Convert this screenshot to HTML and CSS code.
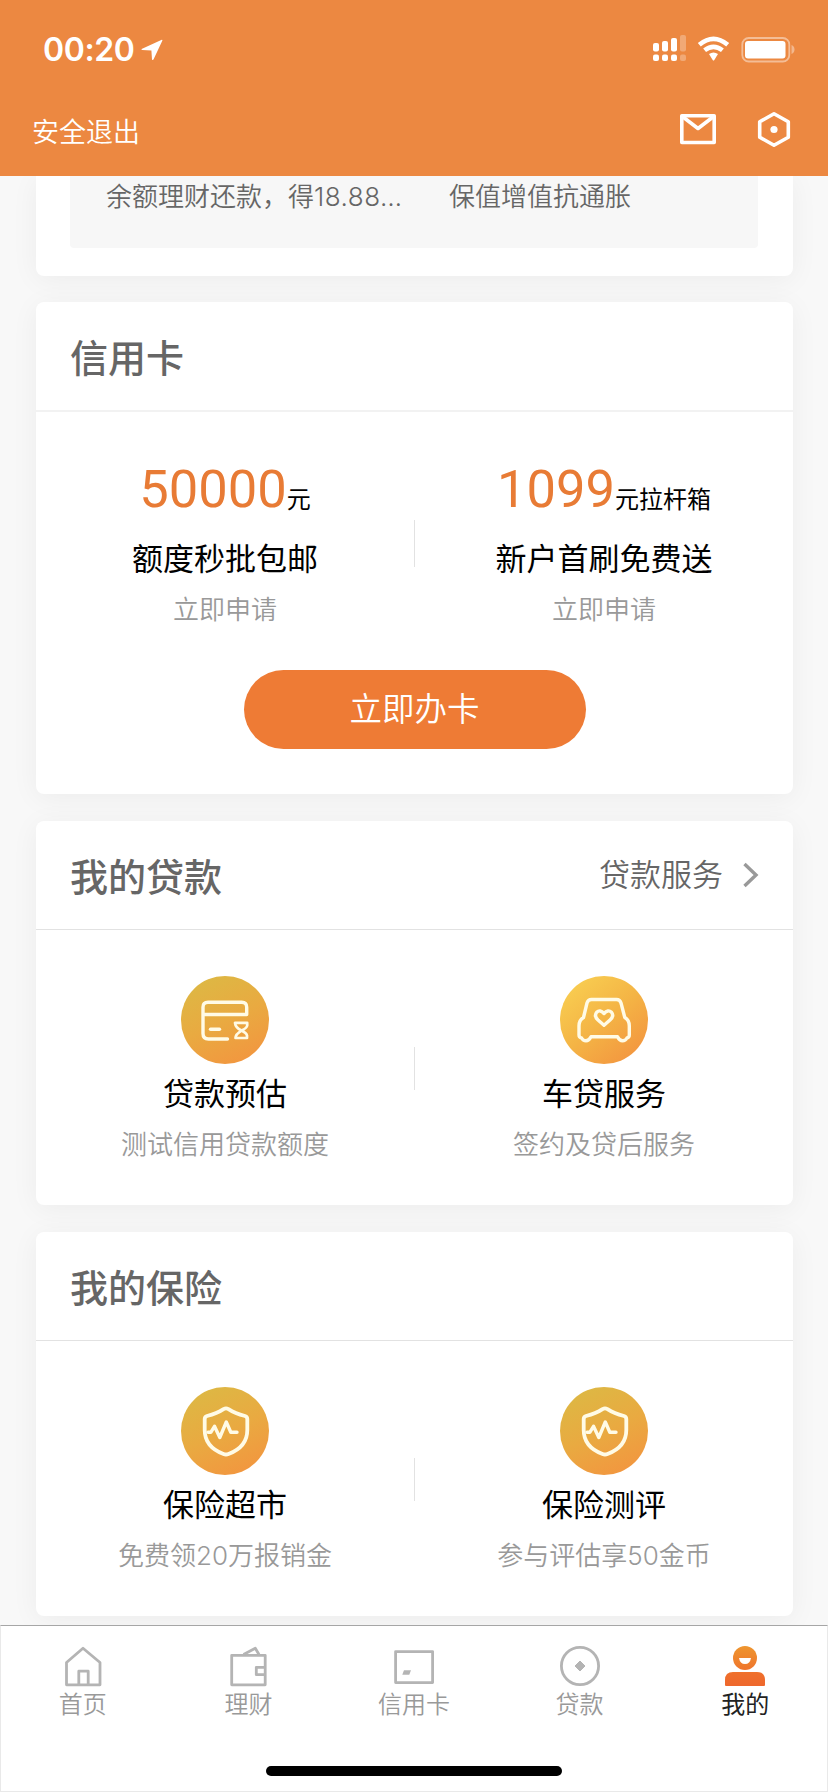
FILE: index.html
```html
<!DOCTYPE html>
<html lang="zh-CN">
<head>
<meta charset="utf-8">
<title>我的</title>
<link rel="stylesheet" href="styles.css">
</head>
<body>
<div class="screen">
  <header class="header">
    <div class="status">
      <div class="status-left">
        <span class="time">00:20</span>
        <svg class="locate" width="22" height="22" viewBox="0 0 22 22"><path d="M20.800 0.800 L0.600 10 Q0.200 10.900 1.200 11.100 L10.400 11.500 L11 20.400 Q11.700 21.400 12.500 20.500 L21.400 1.400 Q21.500 0.600 20.800 0.800Z" fill="#fff"/></svg>
      </div>
      <svg class="status-icons" width="144" height="30" viewBox="0 0 144 30">
        <g fill="#fff">
          <rect x="2" y="8" width="6" height="8.500" rx="2"/><rect x="11" y="6" width="6" height="10.500" rx="2"/><rect x="20" y="3" width="6" height="13.500" rx="2"/>
          <rect x="2" y="19.500" width="6" height="6.500" rx="2"/><rect x="11" y="19.500" width="6" height="6.500" rx="2"/><rect x="20" y="19.500" width="6" height="6.500" rx="2"/>
          <g opacity=".28"><rect x="29" y="0" width="6" height="16.500" rx="2"/><rect x="29" y="19.500" width="6" height="6.500" rx="2"/></g>
          <path d="M58 19 Q62.500 16 67 19 L63.300 25 Q62.500 26.200 61.700 25Z"/>
          <rect x="94" y="6" width="40.500" height="17.500" rx="3"/>
          <path d="M140.500 10 Q143.500 11.300 143.500 14.500 Q143.500 17.700 140.500 19Z" opacity=".4"/>
        </g>
        <g fill="none" stroke="#fff" stroke-width="4.600">
          <path d="M48.300 9.700 Q62.500 -2.100 76.700 9.700"/>
          <path d="M53.600 15.300 Q62.500 8.300 71.400 15.300"/>
        </g>
        <rect x="91.300" y="3" width="47" height="23.500" rx="6.500" fill="none" stroke="#fff" stroke-width="1.800" opacity=".45"/>
      </svg>
    </div>
    <div class="navbar">
      <span class="logout">安全退出</span>
      <div class="nav-icons">
        <svg width="38" height="38" viewBox="0 0 38 38" fill="none" stroke="#fff" stroke-width="3.600" stroke-linejoin="round"><rect x="2.800" y="5.800" width="32.400" height="26.700"/><path d="M4 7 L19 18.500 L34 7"/></svg>
        <svg width="38" height="38" viewBox="0 0 38 38"><path d="M19 3.800 L33.300 11.800 V27.200 L19 35.200 L4.700 27.200 V11.800Z" fill="none" stroke="#fff" stroke-width="3.600" stroke-linejoin="round"/><circle cx="19" cy="19.500" r="3.600" fill="#fff"/></svg>
      </div>
    </div>
  </header>

  <main class="content">
    <section class="card promo">
      <div class="promo-box">
        <span class="promo-text">余额理财还款，得<span class="figure">18.88…</span></span>
        <span class="promo-text">保值增值抗通胀</span>
      </div>
    </section>

    <section class="card credit">
      <div class="card-head"><h2>信用卡</h2></div>
      <div class="pair offers">
        <div class="item">
          <div class="amount"><b>50000</b><span>元</span></div>
          <div class="item-title">额度秒批包邮</div>
          <div class="item-sub">立即申请</div>
        </div>
        <div class="item">
          <div class="amount"><b>1099</b><span>元拉杆箱</span></div>
          <div class="item-title">新户首刷免费送</div>
          <div class="item-sub">立即申请</div>
        </div>
      </div>
      <button class="apply">立即办卡</button>
    </section>

    <section class="card service">
      <div class="card-head">
        <h2>我的贷款</h2>
        <a class="more"><span>贷款服务</span>
          <svg width="18" height="28" viewBox="0 0 18 28"><path d="M2.500 3 L14 14 L2.500 25" fill="none" stroke="#999" stroke-width="3.400"/></svg>
        </a>
      </div>
      <div class="pair services">
        <div class="item">
          <div class="badge"><svg viewBox="0 0 88 88"><path d="M65.700 35.500 V31.300 Q65.700 26.300 60.700 26.300 H27 Q22 26.300 22 31.300 V57.500 Q22 63 27.500 63 H46.500 M22 38.500 H65.700 V33"/><path d="M29.500 53.300 H38.500"/><path d="M54 46.800 H66.200 V49.500 Q66 52 61 54.300 Q54.500 58 54.500 62 H66 V59.500 Q65.500 57 60 54.300 Q54.500 51.500 54 46.800Z" stroke-width="2.700"/></svg></div>
          <div class="item-title">贷款预估</div>
          <div class="item-sub">测试信用贷款额度</div>
        </div>
        <div class="item">
          <div class="badge badge-gold"><svg viewBox="0 0 88 88"><path d="M31.500 23.500 H56.500 Q60 23.500 61 27 L64.800 41.500 Q69.300 44 69.300 50 V59 Q69.300 61.500 67 62 Q65.500 64.800 62.500 64.800 Q59.500 64.800 57.500 60.800 H31 Q29 64.800 26 64.800 Q23 64.800 21.500 62 Q19 61.500 19 59 V50 Q19 44 23.500 41.500 L27 27 Q28 23.500 31.500 23.500Z"/><path d="M44 37.500 Q40 33 36.700 36.300 Q33.700 40 38 44 L44 49.300 L50 44 Q54.500 40 51.500 36.300 Q48 33 44 37.500Z"/></svg></div>
          <div class="item-title">车贷服务</div>
          <div class="item-sub">签约及贷后服务</div>
        </div>
      </div>
    </section>

    <section class="card service">
      <div class="card-head"><h2>我的保险</h2></div>
      <div class="pair services">
        <div class="item">
          <div class="badge"><svg viewBox="0 0 88 88"><path d="M42.500 22.100 Q45 20.800 47.500 22.100 Q54 26.500 64 29 Q66.300 29.800 66.300 32 V43 Q66.300 60 47.500 67 Q45 68 42.500 67 Q23.700 60 23.700 43 V32 Q23.700 29.800 26 29 Q36 26.500 42.500 22.100Z" stroke-width="3.800"/><path d="M27 45.300 H29.800 L33.500 39.300 L38.800 50.500 L45.300 35 L49.800 45.300 H56"/></svg></div>
          <div class="item-title">保险超市</div>
          <div class="item-sub">免费领20万报销金</div>
        </div>
        <div class="item">
          <div class="badge"><svg viewBox="0 0 88 88"><path d="M42.500 22.100 Q45 20.800 47.500 22.100 Q54 26.500 64 29 Q66.300 29.800 66.300 32 V43 Q66.300 60 47.500 67 Q45 68 42.500 67 Q23.700 60 23.700 43 V32 Q23.700 29.800 26 29 Q36 26.500 42.500 22.100Z" stroke-width="3.800"/><path d="M27 45.300 H29.800 L33.500 39.300 L38.800 50.500 L45.300 35 L49.800 45.300 H56"/></svg></div>
          <div class="item-title">保险测评</div>
          <div class="item-sub">参与评估享50金币</div>
        </div>
      </div>
    </section>
  </main>

  <footer class="tabbar">
    <nav class="tabs">
      <a class="tab"><svg viewBox="0 0 44 44"><path d="M22 4.300 L39 18.500 V40.800 H5.500 V18.500Z"/><path d="M17.800 40.500 V27.200 H27.200 V40.500"/></svg>首页</a>
      <a class="tab"><svg viewBox="0 0 44 44"><rect x="5.700" y="11.300" width="33.500" height="29.500"/><path d="M17.500 10.500 L29.300 4.300 L33 10.500"/><path d="M39 23.300 H30.300 V30.700 H39"/></svg>理财</a>
      <a class="tab"><svg viewBox="0 0 44 44"><rect x="3.600" y="7.600" width="37" height="31"/><path d="M12 26.300 H19 L17.300 30.700 H10.300Z" fill="#b4b4b4" stroke="none"/></svg>信用卡</a>
      <a class="tab"><svg viewBox="0 0 44 44"><circle cx="22" cy="22" r="18.600"/><path d="M22 17 L27 22 L22 27 L17 22Z" fill="#b4b4b4" stroke-width="1"/></svg>贷款</a>
      <a class="tab tab-active"><svg viewBox="0 0 44 44"><defs><linearGradient id="me" x1="0" y1="2" x2="0" y2="42" gradientUnits="userSpaceOnUse"><stop offset="0" stop-color="#ee962f"/><stop offset=".7" stop-color="#ef6f2c"/><stop offset="1" stop-color="#ee672c"/></linearGradient></defs><g fill="url(#me)" stroke="none"><circle cx="22" cy="14" r="12"/><path d="M2 41 V36 Q2 28 10 28 H34 Q42 28 42 36 V41 Q42 42 41 42 H3 Q2 42 2 41Z"/></g><path d="M16 14 H28 Q27 20 22 20 Q17 20 16 14Z" fill="#fff" stroke="none"/></svg>我的</a>
    </nav>
    <div class="home-indicator"></div>
  </footer>
</div>
</body>
</html>
```
FILE: styles.css
```css
* { box-sizing: border-box; }

body {
  margin: 0;
  font-family: Inter, "Noto Sans CJK SC", sans-serif;
  color: #000;
}

.screen {
  display: flex;
  flex-direction: column;
  width: 828px;
  height: 1792px;
  overflow: hidden;
  background: #f8f8f8;
}

svg { display: block; flex: none; }

/* Header */
.header {
  position: relative;
  z-index: 1;
  flex: none;
  height: 176px;
  background: #ec8841;
  color: #fff;
}

.status {
  display: flex;
  justify-content: space-between;
  height: 90px;
  padding: 35px 33px 0 43px;
}

.status-left { display: flex; gap: 7px; }

.time {
  font-weight: 600;
  font-size: 32px;
  line-height: 30px;
  letter-spacing: -0.4px;
}

.locate { margin-top: 4px; }

.navbar {
  display: flex;
  justify-content: space-between;
  padding: 20px 35px 0 32px;
}

.logout {
  padding-top: 3px;
  font-weight: 350;
  font-size: 27px;
  line-height: 40px;
}

.nav-icons { display: flex; gap: 38px; }

/* Cards */
.content {
  display: flex;
  flex-direction: column;
  flex: none;
  height: 1449px;
  padding: 0 35px 0 36px;
}

.card {
  flex: none;
  border-radius: 8px;
  background: #fff;
  box-shadow: 0 4px 28px rgba(0, 0, 0, 0.05);
}

.promo {
  height: 100px;
  padding: 0 35px 0 34px;
  border-radius: 0 0 8px 8px;
}

.promo-box {
  display: grid;
  grid-template-columns: 343px 1fr;
  height: 72px;
  padding: 2px 0 0 36px;
  border-radius: 0 0 4px 4px;
  background: #f7f7f7;
}

.promo-text {
  color: #666;
  font-weight: 350;
  font-size: 26px;
  line-height: 37px;
  white-space: nowrap;
}

.figure { letter-spacing: 0.5px; }

.credit { height: 492px; margin-top: 26px; }
.service { height: 384px; margin-top: 27px; }

.card-head {
  display: flex;
  align-items: center;
  justify-content: space-between;
  height: 109px;
  padding: 3px 33px 0 34px;
  border-bottom: 1px solid #e2e2e2;
}

.credit .card-head { height: 110px; border-bottom: 2px solid #f2f2f2; }

h2 {
  margin: 0;
  color: #666;
  font-weight: 500;
  font-size: 38px;
  line-height: 56px;
}

.more {
  display: flex;
  align-items: center;
  gap: 19px;
  color: #666;
  font-weight: 350;
  font-size: 31px;
  line-height: 44px;
}

.more span { margin-top: -4px; }
.more svg { margin-top: -3px; }

.pair {
  display: grid;
  grid-template-columns: 1fr 1px 1fr;
}

.pair::before {
  content: "";
  grid-column: 2;
  grid-row: 1;
  background: #e2e2e2;
}

.pair .item:first-child { grid-column: 1; grid-row: 1; }
.pair .item:last-child { grid-column: 3; grid-row: 1; }

.offers { height: 258px; }
.offers::before { height: 47px; margin-top: 108px; }
.services::before { height: 43px; margin-top: 117px; }

.item {
  display: flex;
  flex-direction: column;
  align-items: center;
  padding-top: 46px;
  white-space: nowrap;
}

.amount {
  height: 71px;
  padding-top: 1px;
  line-height: 60px;
  font-size: 24px;
}

.amount span {
  position: relative;
  top: 1px;
}

.amount b {
  color: #e87b35;
  font-family: Roboto, sans-serif;
  font-weight: 400;
  font-size: 52.5px;
}

.item-title {
  height: 60px;
  font-size: 31px;
  font-weight: 400;
  line-height: 60px;
}

.item-sub {
  color: #999;
  font-weight: 350;
  font-size: 26px;
  line-height: 41px;
}

.offers .item-title { line-height: 59px; }
.offers .item-sub { line-height: 42px; }

.apply {
  display: block;
  width: 342px;
  height: 79px;
  margin: 0 auto;
  padding: 0;
  border: 0;
  border-radius: 40px;
  background: #ee7b35;
  color: #fff;
  font: 350 32.5px/1 "Noto Sans CJK SC", sans-serif;
  padding-bottom: 5px;
}

.badge {
  width: 88px;
  height: 88px;
  border-radius: 50%;
  background: linear-gradient(155deg, #dcb944 5%, #e9aa41 50%, #f3943f 95%);
}

.badge-gold { background: linear-gradient(140deg, #f8cc50 12%, #f4b445 50%, #f3943f 92%); }

.badge svg {
  fill: none;
  stroke: #fffbe6;
  stroke-width: 3.4;
  stroke-linecap: round;
  stroke-linejoin: round;
}

/* Tab bar */
.tabbar {
  flex: 1;
  border: 1px solid #e9e9e9;
  border-top-color: #a6a6a6;
  background: #fff;
}

.tabs {
  display: grid;
  grid-template-columns: repeat(5, 1fr);
  height: 140px;
  margin: 0 -1px;
  padding-top: 18px;
}

.tab {
  display: flex;
  flex-direction: column;
  align-items: center;
  color: #999;
  font-weight: 350;
  font-size: 24px;
  line-height: 33px;
}

.tab svg {
  width: 44px;
  height: 44px;
  fill: none;
  stroke: #b4b4b4;
  stroke-width: 2.8;
  stroke-linejoin: round;
}

.tab-active { color: #222; font-weight: 400; }

.home-indicator {
  width: 296px;
  height: 10px;
  margin: 0 auto;
  border-radius: 5px;
  background: #000;
}
```
